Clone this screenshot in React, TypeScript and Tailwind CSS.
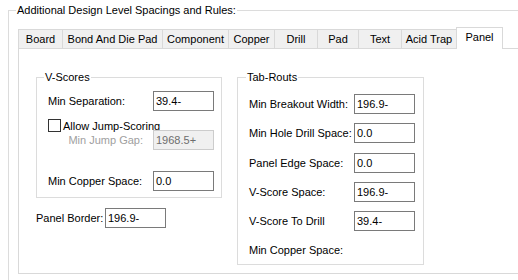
import React from 'react'

const tabs = [
  { name: 'Board', w: 'w-[44px]' },
  { name: 'Bond And Die Pad', w: 'w-[100px]' },
  { name: 'Component', w: 'w-[66px]' },
  { name: 'Copper', w: 'w-[46px]' },
  { name: 'Drill', w: 'w-[43px]' },
  { name: 'Pad', w: 'w-[41px]' },
  { name: 'Text', w: 'w-[43px]' },
  { name: 'Acid Trap', w: 'w-[55px]' },
]

function Field({ value, disabled }: { value: string; disabled?: boolean }) {
  return (
    <div
      className={
        disabled
          ? 'w-[61px] h-[20px] border border-[#cccccc] bg-[#f0f0f0] text-[#6d6d6d] pl-[2px] flex items-center'
          : 'w-[61px] h-[20px] border border-[#7a7a7a] bg-white pl-[2px] flex items-center'
      }
    >
      {value}
    </div>
  )
}

export default function App() {
  return (
    <div className="w-[518px] h-[280px] bg-white overflow-hidden text-[11px] leading-[14px] text-black font-['Liberation_Sans',Arial,sans-serif]">
      {/* Outer group */}
      <fieldset className="ml-[8px] mt-[3px] w-[540px] h-[300px] border border-[#dcdcdc] pl-[7px]">
        <legend className="px-[1px]">Additional Design Level Spacings and Rules:</legend>

        <div className="mt-[10px] ml-[2px]">
          {/* Tab strip */}
          <div className="flex items-end h-[22px]">
            {tabs.map((t) => (
              <div
                key={t.name}
                className={`${t.w} h-[20px] shrink-0 bg-[#f0f0f0] border-t border-l border-b border-[#d9d9d9] flex items-center justify-center whitespace-nowrap`}
              >
                {t.name}
              </div>
            ))}
            <div className="w-[47px] h-[22px] shrink-0 bg-white border-t border-l border-r border-[#d9d9d9] flex justify-center pt-[2px] whitespace-nowrap">
              Panel
            </div>
            <div className="flex-1 h-full border-b border-[#d9d9d9]" />
          </div>

          {/* Tab page */}
          <div className="h-[225px] border-l border-r border-b border-[#d9d9d9] pl-[17px] pt-[21px] flex gap-[15px]">
            {/* Left column */}
            <div className="flex flex-col">
              <fieldset className="w-[186px] border border-[#dcdcdc] pb-[6px]">
                <legend className="ml-[7px] px-[1px]">V-Scores</legend>
                <div className="pl-[11px] flex flex-col">
                  <div className="mt-[7px] flex items-center">
                    <span className="w-[105px]">Min Separation:</span>
                    <Field value="39.4-" />
                  </div>
                  <div className="mt-[8px] h-[13px] flex items-center gap-[2px]">
                    <div className="w-[13px] h-[13px] border border-[#333333] bg-white" />
                    <span>Allow Jump-Scoring</span>
                  </div>
                  <div className="mt-[-2px] flex items-center">
                    <span className="w-[105px] pr-[10px] text-right text-[#a0a0a0]">Min Jump Gap:</span>
                    <Field value="1968.5+" disabled />
                  </div>
                  <div className="mt-[21px] flex items-center">
                    <span className="w-[105px]">Min Copper Space:</span>
                    <Field value="0.0" />
                  </div>
                </div>
              </fieldset>
              <div className="mt-[10px] flex items-center">
                <span className="w-[69px]">Panel Border:</span>
                <Field value="196.9-" />
              </div>
            </div>

            {/* Right column */}
            <fieldset className="w-[187px] h-[195px] border border-[#dcdcdc]">
              <legend className="ml-[8px] px-[1px]">Tab-Routs</legend>
              <div className="pl-[11px] flex flex-col">
                <div className="mt-[10px] flex items-center">
                  <span className="w-[105px]">Min Breakout Width:</span>
                  <Field value="196.9-" />
                </div>
                <div className="mt-[9px] flex items-center">
                  <span className="w-[105px]">Min Hole Drill Space:</span>
                  <Field value="0.0" />
                </div>
                <div className="mt-[10px] flex items-center">
                  <span className="w-[105px]">Panel Edge Space:</span>
                  <Field value="0.0" />
                </div>
                <div className="mt-[9px] flex items-center">
                  <span className="w-[105px]">V-Score Space:</span>
                  <Field value="196.9-" />
                </div>
                <div className="mt-[9px] flex items-center">
                  <span className="w-[105px]">V-Score To Drill</span>
                  <Field value="39.4-" />
                </div>
                <div className="mt-[9px] h-[20px] flex items-center">
                  <span>Min Copper Space:</span>
                </div>
              </div>
            </fieldset>
          </div>
        </div>
      </fieldset>
    </div>
  )
}
